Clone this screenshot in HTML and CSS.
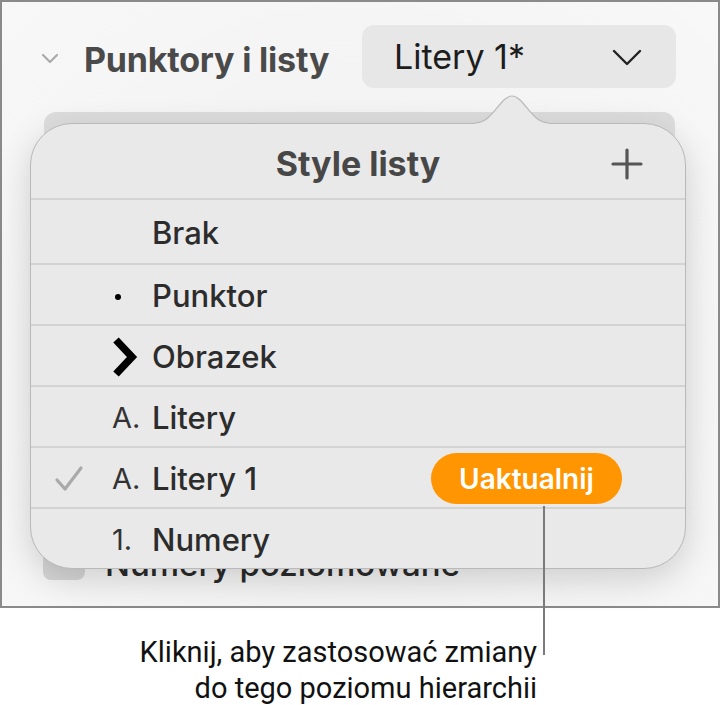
FILE: index.html
```html
<!DOCTYPE html>
<html lang="pl">
<head>
    <meta charset="UTF-8">
    <title>Style listy</title>
    <link rel="stylesheet" href="styles.css">
</head>
<body>
    <div class="panel">
        <div class="section-header">
            <svg class="disclosure" width="18" height="12" viewBox="0 0 18 12">
                <polyline points="2,2 9,9 16,2" fill="none" stroke="#ababab" stroke-width="2.2" stroke-linecap="round" stroke-linejoin="round"/>
            </svg>
            <span class="section-title">Punktory i listy</span>
            <div class="select-btn">
                <span>Litery 1*</span>
                <svg width="30" height="18" viewBox="0 0 30 18">
                    <polyline points="2,2 15,15 28,2" fill="none" stroke="#222" stroke-width="2.4" stroke-linecap="round" stroke-linejoin="round"/>
                </svg>
            </div>
        </div>

        <div class="behind-bar"></div>

        <div class="check-row">
            <div class="check-box"></div>
            <span class="check-label">Numery poziomowane</span>
        </div>

        <div class="popover">
            <svg class="popover-arrow" width="74" height="32" viewBox="0 0 74 32">
                <path d="M0,29 C18,29 25,2 37,2 C49,2 56,29 74,29 L74,32 L0,32 Z" fill="#e9e9e9"/>
                <path d="M0,29 C18,29 25,2 37,2 C49,2 56,29 74,29" fill="none" stroke="#b9b9b9" stroke-width="1.2"/>
            </svg>
            <div class="popover-header">
                <span class="popover-title">Style listy</span>
                <svg class="plus" width="32" height="32" viewBox="0 0 32 32">
                    <path d="M16 2 V30 M2 16 H30" stroke="#565656" stroke-width="3.2" stroke-linecap="round"/>
                </svg>
            </div>
            <div class="style-row first">
                <span class="check"></span>
                <span class="marker"></span>
                <span class="style-name">Brak</span>
            </div>
            <div class="style-row">
                <span class="check"></span>
                <span class="marker"><span class="dot"></span></span>
                <span class="style-name">Punktor</span>
            </div>
            <div class="style-row">
                <span class="check"></span>
                <span class="marker">
                    <svg width="28" height="42" viewBox="0 0 28 42">
                        <polyline points="4,4 20,21 4,38" fill="none" stroke="#000" stroke-width="7.5" stroke-linejoin="miter"/>
                    </svg>
                </span>
                <span class="style-name">Obrazek</span>
            </div>
            <div class="style-row">
                <span class="check"></span>
                <span class="marker">A.</span>
                <span class="style-name">Litery</span>
            </div>
            <div class="style-row">
                <span class="check">
                    <svg width="30" height="28" viewBox="0 0 30 28">
                        <polyline points="3,15 11,24 27,3" fill="none" stroke="#a9a9a9" stroke-width="3.2" stroke-linecap="round" stroke-linejoin="round"/>
                    </svg>
                </span>
                <span class="marker">A.</span>
                <span class="style-name">Litery 1</span>
                <span class="update-btn">Uaktualnij</span>
            </div>
            <div class="style-row">
                <span class="check"></span>
                <span class="marker">1.</span>
                <span class="style-name">Numery</span>
            </div>
        </div>

        <div class="callout-line"></div>
    </div>

    <div class="callout">
        Kliknij, aby zastosować zmiany<br>
        do tego poziomu hierarchii
    </div>
</body>
</html>
```

FILE: styles.css
```css
* {
    margin: 0;
    padding: 0;
    box-sizing: border-box;
}

body {
    font-family: Inter, Roboto, sans-serif;
    background: #ffffff;
    width: 721px;
    height: 705px;
    overflow: hidden;
}

.panel {
    position: relative;
    width: 720px;
    height: 608px;
    border: 2px solid #8a8a8a;
    background: radial-gradient(ellipse at 50% 60%, #ececec 0%, #f4f4f4 55%, #f8f8f8 100%);
}

.section-header {
    display: flex;
    align-items: center;
    padding: 23px 42px 0 39px;
    height: 86px;
}

.disclosure {
    margin-right: 25px;
    margin-top: 4px;
}

.section-title {
    font-size: 34px;
    font-weight: 700;
    color: #4a4a4a;
    letter-spacing: -0.2px;
    margin-top: 6px;
}

.select-btn {
    margin-left: auto;
    width: 314px;
    height: 63px;
    background: #e7e7e7;
    border-radius: 12px;
    display: flex;
    align-items: center;
    justify-content: space-between;
    padding: 0 34px 0 32px;
    font-size: 34px;
    color: #1d1d1d;
}

.select-btn svg {
    margin-top: 2px;
}

.behind-bar {
    margin: 24px 43px 0 42px;
    height: 60px;
    border-radius: 12px;
    background: linear-gradient(#dcdcdc, #e4e4e4);
}

.check-row {
    display: flex;
    align-items: center;
    margin-top: 372px;
    padding-left: 41px;
}

.check-box {
    width: 42px;
    height: 32px;
    border-radius: 8px;
    background: #d6d6d6;
    margin-right: 20px;
}

.check-label {
    font-size: 33px;
    font-weight: 500;
    color: #2a2a2a;
}

.popover {
    position: absolute;
    left: 28px;
    top: 121px;
    width: 656px;
    height: 446px;
    background: #e9e9e9;
    border: 1px solid #b9b9b9;
    border-radius: 42px;
    box-shadow: 0 10px 34px rgba(0, 0, 0, 0.16);
}

.popover-arrow {
    position: absolute;
    left: 444px;
    top: -30px;
}

.popover-header {
    position: relative;
    height: 74px;
    display: flex;
    align-items: center;
    justify-content: center;
    padding-top: 4px;
}

.popover-title {
    font-size: 34px;
    font-weight: 700;
    color: #474747;
}

.plus {
    position: absolute;
    right: 42px;
    top: 24px;
}

.style-row {
    display: flex;
    align-items: center;
    height: 61px;
    border-top: 2px solid #d3d3d3;
    padding-top: 2px;
}

.style-row.first {
    height: 65px;
}

.check {
    width: 81px;
    padding-left: 23px;
    display: flex;
    align-items: center;
}

.marker {
    width: 40px;
    display: flex;
    align-items: center;
    font-size: 29px;
    color: #333333;
}

.dot {
    width: 6px;
    height: 6px;
    border-radius: 50%;
    background: #000;
    margin-left: 3px;
    margin-top: 2px;
}

.style-name {
    font-size: 31px;
    font-weight: 500;
    color: #2c2c2c;
}

.update-btn {
    margin-left: auto;
    margin-right: 63px;
    width: 191px;
    height: 51px;
    border-radius: 26px;
    background: #ff9500;
    color: #ffffff;
    font-size: 28px;
    font-weight: 600;
    display: flex;
    align-items: center;
    justify-content: center;
}

.callout-line {
    position: absolute;
    left: 541px;
    top: 504px;
    width: 2px;
    height: 149px;
    background: #7a7a7a;
    z-index: 2;
}

.callout {
    width: 537px;
    margin-top: 26px;
    text-align: right;
    font-family: Roboto, sans-serif;
    font-size: 29px;
    line-height: 36px;
    color: #111111;
}
```
